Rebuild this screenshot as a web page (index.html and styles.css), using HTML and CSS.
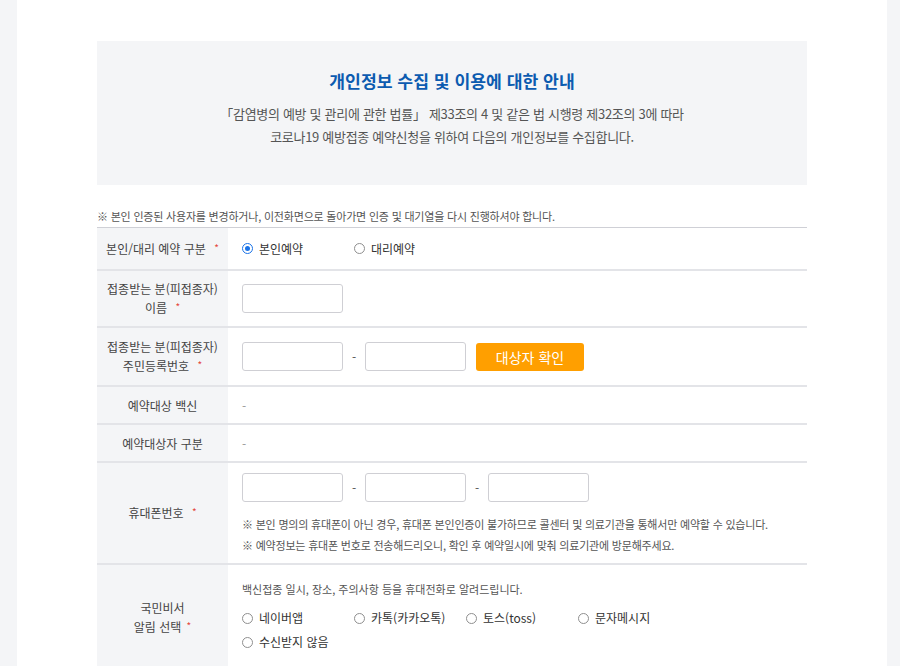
FILE: index.html
```html
<!DOCTYPE html>
<html lang="ko">
<head>
<meta charset="utf-8">
<title>개인정보 수집 및 이용에 대한 안내</title>
<link rel="stylesheet" href="styles.css">
</head>
<body>
<div class="page">
  <div class="content">
    <section class="notice">
      <h1 class="notice-title">개인정보 수집 및 이용에 대한 안내</h1>
      <p class="notice-text">「감염병의 예방 및 관리에 관한 법률」 제33조의 4 및 같은 법 시행령 제32조의 3에 따라<br>코로나19 예방접종 예약신청을 위하여 다음의 개인정보를 수집합니다.</p>
    </section>

    <p class="top-note">※ 본인 인증된 사용자를 변경하거나, 이전화면으로 돌아가면 인증 및 대기열을 다시 진행하셔야 합니다.</p>

    <div class="form-table">
      <div class="row r1">
        <div class="label"><span>본인/대리 예약 구분 <span class="req">*</span></span></div>
        <div class="cell">
          <div class="radios">
            <span class="radio-opt"><span class="radio checked"></span>본인예약</span>
            <span class="radio-opt"><span class="radio"></span>대리예약</span>
          </div>
        </div>
      </div>
      <div class="row r2">
        <div class="label"><span>접종받는 분(피접종자)<br>이름 <span class="req">*</span></span></div>
        <div class="cell"><span class="field"></span></div>
      </div>
      <div class="row r3">
        <div class="label"><span>접종받는 분(피접종자)<br>주민등록번호 <span class="req">*</span></span></div>
        <div class="cell">
          <span class="field"></span><span class="dash">-</span><span class="field"></span>
          <button class="btn-check" type="button">대상자 확인</button>
        </div>
      </div>
      <div class="row r4">
        <div class="label"><span>예약대상 백신</span></div>
        <div class="cell"><span class="empty">-</span></div>
      </div>
      <div class="row r4">
        <div class="label"><span>예약대상자 구분</span></div>
        <div class="cell"><span class="empty">-</span></div>
      </div>
      <div class="row r6">
        <div class="label"><span>휴대폰번호 <span class="req">*</span></span></div>
        <div class="cell col">
          <div class="fields">
            <span class="field"></span><span class="dash">-</span><span class="field"></span><span class="dash">-</span><span class="field"></span>
          </div>
          <ul class="notes">
            <li>※ 본인 명의의 휴대폰이 아닌 경우, 휴대폰 본인인증이 불가하므로 콜센터 및 의료기관을 통해서만 예약할 수 있습니다.</li>
            <li>※ 예약정보는 휴대폰 번호로 전송해드리오니, 확인 후 예약일시에 맞춰 의료기관에 방문해주세요.</li>
          </ul>
        </div>
      </div>
      <div class="row r7">
        <div class="label"><span>국민비서<br>알림 선택 <span class="req tight">*</span></span></div>
        <div class="cell col">
          <p class="desc">백신접종 일시, 장소, 주의사항 등을 휴대전화로 알려드립니다.</p>
          <div class="radios wrap">
            <span class="radio-opt"><span class="radio"></span>네이버앱</span>
            <span class="radio-opt"><span class="radio"></span>카톡(카카오톡)</span>
            <span class="radio-opt"><span class="radio"></span>토스(toss)</span>
            <span class="radio-opt"><span class="radio"></span>문자메시지</span>
            <span class="radio-opt"><span class="radio"></span>수신받지 않음</span>
          </div>
        </div>
      </div>
    </div>
  </div>
</div>
</body>
</html>
```

FILE: styles.css
```css
* { box-sizing: border-box; }
html, body { margin: 0; padding: 0; }
body {
  background: #f4f5f7;
  font-family: "Noto Sans CJK KR", "Noto Sans", sans-serif;
  color: #333;
}
.page {
  width: 870px;
  margin-left: 17px;
  background: #fff;
  min-height: 666px;
}
.content {
  padding: 41px 80px 0;
}
.notice {
  background: #f4f5f7;
  height: 144px;
  padding-top: 28px;
  text-align: center;
}
.notice-title {
  margin: 0;
  font-size: 17.2px;
  line-height: 24px;
  font-weight: 700;
  color: #0c5bb0;
}
.notice-text {
  margin: 9px 0 0;
  font-size: 13px;
  line-height: 23px;
  color: #555;
  letter-spacing: -0.3px;
}
.top-note {
  margin: 22px 0 2px;
  font-size: 11px;
  line-height: 18px;
  color: #555;
  letter-spacing: -0.2px;
}
.form-table {
  border-top: 1px solid #cfd0d6;
}
.row {
  display: grid;
  grid-template-columns: 131px 1fr;
  border-bottom: 2px solid #e3e4e8;
}
.label {
  background: #f4f5f7;
  display: flex;
  align-items: center;
  justify-content: center;
  text-align: center;
  font-size: 12px;
  line-height: 19px;
  color: #444;
}
.req {
  color: #e4473c;
  font-size: 10px;
  margin-left: 5px;
  position: relative;
  top: -2px;
}
.req.tight { margin-left: 2px; }
.cell {
  display: flex;
  align-items: center;
  padding-left: 14px;
  font-size: 12px;
  color: #333;
}
.cell.col {
  flex-direction: column;
  align-items: flex-start;
  justify-content: flex-start;
}
.r1 { height: 43px; }
.r2 { height: 57px; }
.r3 { height: 59px; }
.r4 { height: 38px; }
.r6 { height: 102px; }
.r7 { height: 110px; }
.r6 .cell { padding-top: 10px; }
.r7 .cell { padding-top: 14px; }
.r7 .label { padding-bottom: 4px; }
.field {
  display: inline-block;
  width: 101px;
  height: 29px;
  border: 1px solid #cfcfd4;
  border-radius: 3px;
  background: #fff;
}
.fields { display: flex; align-items: center; }
.dash {
  display: inline-block;
  width: 22px;
  text-align: center;
  font-size: 12px;
  color: #555;
}
.btn-check {
  margin-left: 10px;
  width: 108px;
  height: 28px;
  border: 0;
  border-radius: 3px;
  background: #ff9f00;
  color: #fff;
  font-family: inherit;
  font-size: 14px;
  padding: 0;
}
.empty { color: #999; }
.radios {
  display: flex;
}
.radios.wrap {
  flex-wrap: wrap;
  width: 460px;
  margin-top: 7px;
}
.radio-opt {
  width: 112px;
  display: flex;
  align-items: center;
  font-size: 12px;
  line-height: 24px;
  color: #333;
}
.radio {
  display: inline-block;
  width: 11px;
  height: 11px;
  border: 1px solid #8f8f8f;
  border-radius: 50%;
  margin-right: 6px;
  background: #fff;
  position: relative;
}
.radio.checked {
  border-color: #1a73e8;
}
.radio.checked::after {
  content: "";
  position: absolute;
  left: 2px;
  top: 2px;
  width: 5px;
  height: 5px;
  border-radius: 50%;
  background: #1a73e8;
}
.notes {
  list-style: none;
  margin: 12px 0 0;
  padding: 0;
  font-size: 11px;
  line-height: 21px;
  color: #555;
  letter-spacing: -0.2px;
}
.desc {
  margin: 0;
  font-size: 11px;
  line-height: 20px;
  color: #555;
}
```
